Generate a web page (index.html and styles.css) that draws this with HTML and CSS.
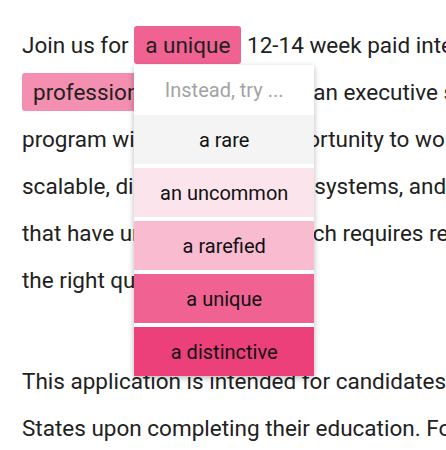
FILE: index.html
```html
<!DOCTYPE html>
<html lang="en">
<head>
<meta charset="utf-8">
<title>Suggestions</title>
<link rel="stylesheet" href="styles.css">
</head>
<body>
<main class="doc">
  <p class="para">Join us for <span class="hl hl-active">a unique<span class="menu">
      <span class="menu-head">Instead, try ...</span>
      <span class="opt opt-1">a rare</span>
      <span class="opt opt-2">an uncommon</span>
      <span class="opt opt-3">a rarefied</span>
      <span class="opt opt-4">a unique</span>
      <span class="opt opt-5">a distinctive</span>
    </span></span> 12-14 week paid internship that offers personal and<br><span class="hl hl-soft">professional</span> development, an executive speaker series, and<br>program will give you an opportunity to work on complex computer<br>scalable, distributed network systems, and also collaborate on<br>that have universal value, which requires research, awareness,<br>the right questions.</p>
  <p class="para">This application is intended for candidates who plan to work in the United<br>States upon completing their education. For more information</p>
</main>
</body>
</html>
```
FILE: styles.css
```css
html, body {
  margin: 0;
  padding: 0;
  background: #ffffff;
  overflow: hidden;
}

.doc {
  padding: 22px 0 0 22px;
  font-family: Roboto, "Noto Sans", sans-serif;
  font-size: 22.5px;
  line-height: 47px;
  color: #212121;
}

.para {
  margin: 0 0 54px 0;
  white-space: nowrap;
}

.hl {
  position: relative;
  padding: 6.3px 11px;
  border-radius: 3px;
}

.hl-active {
  background: #f06292;
}

.hl-soft {
  background: #f48fb1;
}

.menu {
  position: absolute;
  top: 100%;
  left: 0;
  margin-top: 1px;
  width: 180px;
  display: flex;
  flex-direction: column;
  gap: 4px;
  background: #ffffff;
  box-shadow: 0 2px 6px rgba(0, 0, 0, 0.28);
  font-size: 20px;
  line-height: 24px;
  color: #111111;
  text-align: center;
  z-index: 2;
}

.menu-head {
  display: flex;
  align-items: center;
  justify-content: center;
  height: 50px;
  margin-bottom: -4px;
  color: #a3a3a3;
}

.opt {
  display: flex;
  align-items: center;
  justify-content: center;
  height: 49px;
}

.opt-1 { background: #f4f4f4; }
.opt-2 { background: #fce4ec; }
.opt-3 { background: #f8bbd0; }
.opt-4 { background: #f06292; }
.opt-5 { background: #ec407a; }
```
